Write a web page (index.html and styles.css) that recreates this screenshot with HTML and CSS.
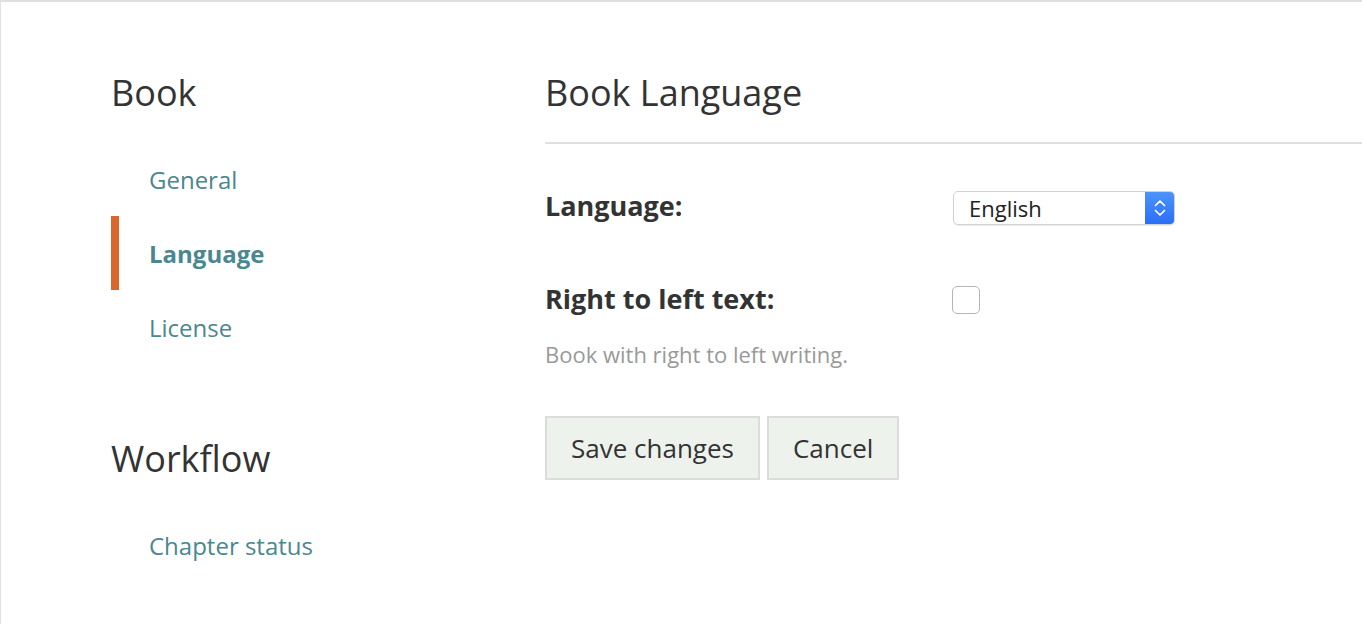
FILE: index.html
```html
<!DOCTYPE html>
<html lang="en">
<head>
    <meta charset="UTF-8">
    <meta name="viewport" content="width=device-width, initial-scale=1.0">
    <title>Book Language</title>
    <link rel="stylesheet" href="styles.css">
</head>
<body>
    <div class="page">
        <aside class="sidebar">
            <h2 class="side-title">Book</h2>
            <ul class="side-nav">
                <li><a href="#">General</a></li>
                <li class="active"><a href="#">Language</a></li>
                <li><a href="#">License</a></li>
            </ul>
            <h2 class="side-title workflow">Workflow</h2>
            <ul class="side-nav">
                <li><a href="#">Chapter status</a></li>
            </ul>
        </aside>

        <main class="content">
            <h1 class="content-title">Book Language</h1>
            <form class="settings">
                <div class="field">
                    <label class="field-label">Language:</label>
                    <div class="select">
                        <span class="select-value">English</span>
                        <span class="select-arrows">
                            <svg width="14" height="24" viewBox="0 0 14 24">
                                <path d="M2.5 9.5 L7 5 L11.5 9.5" fill="none" stroke="#fff" stroke-width="1.7" stroke-linecap="round" stroke-linejoin="round"/>
                                <path d="M2.5 14.5 L7 19 L11.5 14.5" fill="none" stroke="#fff" stroke-width="1.7" stroke-linecap="round" stroke-linejoin="round"/>
                            </svg>
                        </span>
                    </div>
                </div>
                <div class="field">
                    <label class="field-label">Right to left text:</label>
                    <span class="checkbox"></span>
                </div>
                <p class="help">Book with right to left writing.</p>
                <div class="actions">
                    <button type="button" class="btn">Save changes</button>
                    <button type="button" class="btn">Cancel</button>
                </div>
            </form>
        </main>
    </div>
</body>
</html>
```

FILE: styles.css
```css
body {
    margin: 0;
    padding: 0;
    font-family: "Open Sans", Arial, sans-serif;
    color: #333;
    background: #fff;
}
.page {
    display: grid;
    grid-template-columns: 434px 1fr;
    padding-left: 110px;
    height: 622px;
    border-top: 2px solid #e0e0e0;
    border-left: 1px solid #e0e0e0;
    overflow: hidden;
}
.side-title {
    margin: 0;
    padding-top: 69px;
    font-size: 36px;
    font-weight: 400;
    line-height: 44px;
    color: #333;
}
.side-title.workflow {
    padding-top: 73px;
}
.side-nav {
    list-style: none;
    margin: 0;
    padding: 27px 0 0;
}
.side-nav li {
    height: 74px;
    display: flex;
    align-items: center;
    border-left: 8px solid transparent;
    padding-left: 30px;
}
.side-nav li a {
    color: #4a8790;
    text-decoration: none;
    font-size: 24px;
}
.side-nav li.active {
    border-left-color: #d9662a;
}
.side-nav li.active a {
    font-weight: 700;
}
.content-title {
    margin: 0;
    padding: 69px 0 27px;
    font-size: 36px;
    font-weight: 400;
    line-height: 44px;
    border-bottom: 2px solid #e0e0e0;
}
.settings {
    padding-top: 46px;
}
.field {
    display: grid;
    grid-template-columns: 408px auto;
    align-items: center;
    height: 36px;
    margin-bottom: 57px;
}
.field-label {
    font-size: 27px;
    font-weight: 700;
    line-height: 32px;
    margin-top: -4px;
    color: #333;
}
.select {
    display: flex;
    width: 220px;
    height: 32px;
    border: 1px solid #d2d2d2;
    border-radius: 5px;
    overflow: hidden;
    box-shadow: 0 1px 1px rgba(0, 0, 0, 0.08);
}
.select-value {
    flex: 1;
    padding-left: 15px;
    font-size: 22px;
    line-height: 32px;
    color: #222;
}
.select-arrows {
    width: 29px;
    display: flex;
    align-items: center;
    justify-content: center;
    background: linear-gradient(#4d93fc, #2a6ef6);
}
.checkbox {
    width: 26px;
    height: 26px;
    border: 1px solid #b5b5b5;
    border-radius: 5px;
    background: #fff;
    margin-left: -1px;
    margin-top: -2px;
}
.help {
    margin: -37px 0 0;
    font-size: 22px;
    line-height: 30px;
    color: #999;
}
.actions {
    display: flex;
    gap: 7px;
    margin-top: 47px;
}
.btn {
    height: 64px;
    padding: 0 24px;
    font-family: "Open Sans", Arial, sans-serif;
    font-size: 26px;
    color: #333;
    background: #eef2ec;
    border: 2px solid #dcdcdc;
    border-radius: 0;
}
```
